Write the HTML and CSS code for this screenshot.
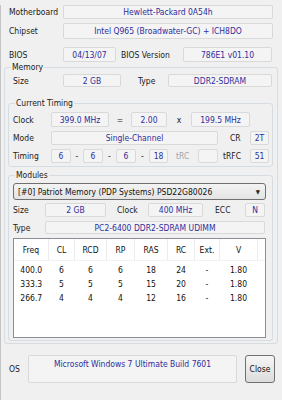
FILE: index.html
```html
<!DOCTYPE html>
<html lang="en">
<head>
  <meta charset="UTF-8">
  <title>Memory</title>
  <link rel="stylesheet" href="styles.css">
</head>
<body>

<div class="wnd">
  <div class="row r1">
    <span class="lbl w54">Motherboard</span>
    <span class="fld w210">Hewlett-Packard 0A54h</span>
  </div>
  <div class="row r2">
    <span class="lbl w54">Chipset</span>
    <span class="fld w210">Intel Q965 (Broadwater-GC) + ICH8DO</span>
  </div>
  <div class="row r3">
    <span class="lbl w54">BIOS</span>
    <span class="fld w53">04/13/07</span>
    <span class="lbl bios-ver">BIOS Version</span>
    <span class="fld w89">786E1 v01.10</span>
  </div>

  <fieldset class="group memory">
    <legend>Memory</legend>
    <div class="row mem-size">
      <span class="lbl w50">Size</span>
      <span class="fld w58">2 GB</span>
      <span class="lbl mem-type">Type</span>
      <span class="fld w104">DDR2-SDRAM</span>
    </div>

    <fieldset class="group inner timing">
      <legend>Current Timing</legend>
      <div class="row t-clock">
        <span class="lbl w38">Clock</span>
        <span class="fld w58">399.0 MHz</span>
        <span class="sym w22">=</span>
        <span class="fld w36">2.00</span>
        <span class="sym w24">x</span>
        <span class="fld w59">199.5 MHz</span>
      </div>
      <div class="row t-mode">
        <span class="lbl w38">Mode</span>
        <span class="fld w167">Single-Channel</span>
        <span class="lbl cr">CR</span>
        <span class="fld w19">2T</span>
      </div>
      <div class="row t-timing">
        <span class="lbl w38">Timing</span>
        <span class="fld w20">6</span>
        <span class="sym w12">-</span>
        <span class="fld w20">6</span>
        <span class="sym w13">-</span>
        <span class="fld w20">6</span>
        <span class="sym w13">-</span>
        <span class="fld w19">18</span>
        <span class="lbl trc">tRC</span>
        <span class="fld w20"></span>
        <span class="lbl trfc">tRFC</span>
        <span class="fld w19">51</span>
      </div>
    </fieldset>

    <fieldset class="group inner modules">
      <legend>Modules</legend>
      <div class="select">
        <span>[#0] Patriot Memory (PDP Systems) PSD22G80026</span>
        <span class="arrow">&#9660;</span>
      </div>
      <div class="row m-size">
        <span class="lbl w32">Size</span>
        <span class="fld w61">2 GB</span>
        <span class="lbl m-clock">Clock</span>
        <span class="fld w55">400 MHz</span>
        <span class="lbl m-ecc">ECC</span>
        <span class="fld w20">N</span>
      </div>
      <div class="row m-type">
        <span class="lbl w32">Type</span>
        <span class="fld w220">PC2-6400 DDR2-SDRAM UDIMM</span>
      </div>
      <div class="spd">
        <table>
          <thead>
            <tr>
              <th>Freq</th><th>CL</th><th>RCD</th><th>RP</th><th>RAS</th><th>RC</th><th>Ext.</th><th>V</th><th></th>
            </tr>
          </thead>
          <tbody>
            <tr><td>400.0</td><td>6</td><td>6</td><td>6</td><td>18</td><td>24</td><td>-</td><td>1.80</td><td></td></tr>
            <tr><td>333.3</td><td>5</td><td>5</td><td>5</td><td>15</td><td>20</td><td>-</td><td>1.80</td><td></td></tr>
            <tr><td>266.7</td><td>4</td><td>4</td><td>4</td><td>12</td><td>16</td><td>-</td><td>1.80</td><td></td></tr>
          </tbody>
        </table>
      </div>
    </fieldset>
  </fieldset>

  <div class="row os-row">
    <span class="lbl w19">OS</span>
    <span class="fld os">Microsoft Windows 7 Ultimate Build 7601</span>
    <button class="close">Close</button>
  </div>
</div>

<div class="taskbar"></div>

</body>
</html>
```

FILE: styles.css
```css
body {
  margin: 0;
  padding: 0;
  background: #f0f0f0;
  font-family: "DejaVu Sans Condensed", "DejaVu Sans", sans-serif;
  font-size: 8.5px;
  color: #1a1a1a;
  width: 282px;
  height: 400px;
  overflow: hidden;
}
.wnd {
  height: 395px;
  border-left: 1px solid #c4c4c4;
  box-sizing: border-box;
}
.row {
  display: flex;
  align-items: center;
}
.lbl {
  display: flex;
  align-items: center;
  height: 100%;
  white-space: nowrap;
}
.sym {
  text-align: center;
}
.fld {
  display: flex;
  align-items: center;
  justify-content: center;
  box-sizing: border-box;
  height: 100%;
  background: #f4f4f4;
  border: 1px solid #d9d9d9;
  border-radius: 2px;
  color: #2e2e9c;
  white-space: nowrap;
}

/* widths */
.w12 { width: 12px; }
.w13 { width: 13px; }
.w19 { width: 19px; }
.w20 { width: 20px; }
.w22 { width: 22px; }
.w24 { width: 24px; }
.w32 { width: 32px; }
.w36 { width: 36px; }
.w38 { width: 38px; }
.w50 { width: 50px; }
.w53 { width: 53px; }
.w54 { width: 54px; }
.w55 { width: 55px; }
.w58 { width: 58px; }
.w59 { width: 59px; }
.w61 { width: 61px; }
.w89 { width: 89px; }
.w104 { width: 104px; }
.w167 { width: 167px; }
.w210 { width: 210px; }
.w220 { width: 220px; }

/* top rows */
.r1 { margin-top: 5px; height: 14px; padding-left: 8px; }
.r2 { margin-top: 4px; height: 16px; padding-left: 8px; }
.r3 { margin-top: 8px; height: 15px; padding-left: 8px; }
.bios-ver { width: 62px; margin-left: 5px; }

/* group boxes */
.group {
  margin: 0;
  padding: 0;
  border: 1px solid #d5dce2;
  border-radius: 3px;
  min-width: 0;
}
.group legend {
  padding: 0 1px;
  line-height: 10px;
  margin-left: 6px;
}
.memory {
  margin-left: 3px;
  width: 274px;
  box-sizing: border-box;
  padding-bottom: 2px;
}
.mem-size { margin-top: 2px; height: 13px; padding-left: 8px; }
.mem-type { width: 30px; margin-left: 17px; }

.inner {
  margin-left: 3px;
  width: 265px;
  box-sizing: border-box;
}
.timing { margin-top: 11px; padding-bottom: 3px; }
.t-clock { margin-top: 4px; height: 15px; padding-left: 4px; }
.t-mode { margin-top: 4px; height: 14px; padding-left: 4px; }
.t-timing { margin-top: 4px; height: 14px; padding-left: 4px; }
.cr { width: 32px; padding-left: 12px; box-sizing: border-box; }
.trc { width: 30px; padding-left: 8px; box-sizing: border-box; color: #a3a3a3; }
.trfc { width: 32px; padding-left: 5px; box-sizing: border-box; }

.modules { margin-top: 3px; padding-bottom: 2px; }
.select {
  margin: 3px 0 0 4px;
  width: 253px;
  height: 17px;
  box-sizing: border-box;
  border: 1px solid #707070;
  border-radius: 3px;
  background: linear-gradient(#f3f3f3, #e4e4e4);
  display: flex;
  align-items: center;
  justify-content: space-between;
  padding: 0 5px 0 4px;
  color: #111;
}
.select .arrow {
  font-size: 6px;
  color: #222;
}
.m-size { margin-top: 3px; height: 14px; padding-left: 4px; }
.m-type { margin-top: 4px; height: 13px; padding-left: 4px; }
.m-clock { width: 42px; padding-left: 11px; box-sizing: border-box; }
.m-ecc { width: 42px; padding-left: 12px; box-sizing: border-box; }

.spd {
  margin: 4px 0 0 4px;
  width: 253px;
  height: 100px;
  box-sizing: border-box;
  background: #fff;
  border: 1px solid #8a8f96;
}
.spd table {
  border-collapse: collapse;
  table-layout: fixed;
  width: 251px;
  font-size: 8.5px;
  color: #111;
}
.spd th {
  font-weight: normal;
  height: 21px;
  padding: 0;
  text-align: center;
  border-right: 1px solid #ececec;
  border-bottom: 1px solid #f2f2f2;
}
.spd tbody tr:first-child td { padding-top: 2px; }
.spd td {
  height: 14px;
  padding: 0;
  text-align: center;
}
.spd th:nth-child(1) { width: 34px; }
.spd th:nth-child(2) { width: 25px; }
.spd th:nth-child(3) { width: 31px; }
.spd th:nth-child(4) { width: 27px; }
.spd th:nth-child(5) { width: 32px; }
.spd th:nth-child(6) { width: 26px; }
.spd th:nth-child(7) { width: 24px; }
.spd th:nth-child(8) { width: 37px; }
.spd th:nth-child(9) { border-right: none; }

/* bottom */
.os-row { margin-top: 11px; height: 28px; padding-left: 8px; }
.w19 { width: 19px; }
.os {
  width: 209px;
  align-items: flex-start;
  padding-top: 3px;
}
.close {
  margin-left: 8px;
  width: 30px;
  height: 28px;
  padding: 0;
  border: 1px solid #707070;
  border-radius: 3px;
  background: linear-gradient(#f6f6f6, #dcdcdc);
  font-family: inherit;
  font-size: 8.5px;
  color: #111;
}
.taskbar {
  height: 5px;
  border-top: 2px solid #3a3a3a;
  background: #c9c9c9;
}
```
